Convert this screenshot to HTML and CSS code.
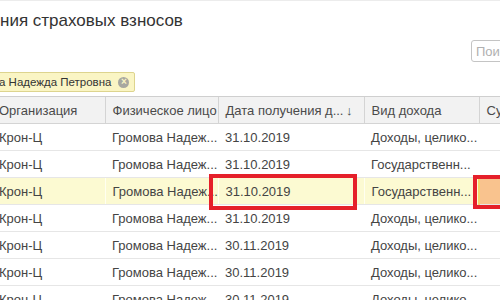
FILE: index.html
```html
<!DOCTYPE html>
<html lang="ru">
<head>
    <meta charset="UTF-8">
    <title>Даты получения страховых взносов</title>
    <link rel="stylesheet" href="styles.css">
</head>
<body>
    <main class="page">
        <h1 class="title">ния страховых взносов</h1>
        <div class="toolbar">
            <input class="search" type="text" placeholder="Поиск">
        </div>
        <div class="filters">
            <span class="tag">а Надежда Петровна <span class="tag-close">×</span></span>
        </div>
        <div class="grid-wrap">
            <table class="grid">
                <colgroup>
                    <col class="c-org"><col class="c-person"><col class="c-date"><col class="c-kind"><col class="c-sum">
                </colgroup>
                <thead>
                    <tr>
                        <th>Организация</th>
                        <th>Физическое лицо</th>
                        <th><span class="th-sort">Дата получения д...<span class="arrow">↓</span></span></th>
                        <th>Вид дохода</th>
                        <th>Сумма</th>
                    </tr>
                </thead>
                <tbody>
                    <tr><td>Крон-Ц</td><td>Громова Надеж...</td><td>31.10.2019</td><td>Доходы, целико...</td><td></td></tr>
                    <tr><td>Крон-Ц</td><td>Громова Надеж...</td><td>31.10.2019</td><td>Государственн...</td><td></td></tr>
                    <tr class="selected"><td>Крон-Ц</td><td>Громова Надеж...</td><td>31.10.2019</td><td>Государственн...</td><td class="active"></td></tr>
                    <tr><td>Крон-Ц</td><td>Громова Надеж...</td><td>31.10.2019</td><td>Доходы, целико...</td><td></td></tr>
                    <tr><td>Крон-Ц</td><td>Громова Надеж...</td><td>30.11.2019</td><td>Доходы, целико...</td><td></td></tr>
                    <tr><td>Крон-Ц</td><td>Громова Надеж...</td><td>30.11.2019</td><td>Доходы, целико...</td><td></td></tr>
                    <tr><td>Крон-Ц</td><td>Громова Надеж...</td><td>30.11.2019</td><td>Доходы, целико...</td><td></td></tr>
                </tbody>
            </table>
            <div class="mark mark-date"></div>
            <div class="mark mark-sum"></div>
        </div>
    </main>
</body>
</html>
```

FILE: styles.css
```css
:root {
    --text: #444444;
    --line: #d4d4d4;
    --row-line: #e6e6e6;
    --head-bg: #f2f2f2;
    --sel-bg: #fcfad2;
    --tag-bg: #faf5c4;
    --mark: #e5202a;
    --font: 'Liberation Sans', Arial, sans-serif;
}
body {
    margin: 0;
    width: 500px;
    height: 300px;
    overflow: hidden;
    background: #ffffff;
    font-family: var(--font);
    color: var(--text);
}
.page {
    border-top: 1px solid #ececec;
}
.title {
    margin: 10px 0 0 0;
    font-size: 17px;
    font-weight: normal;
    line-height: 20px;
    color: #333333;
}
.toolbar {
    display: flex;
    justify-content: flex-end;
    margin-top: 9px;
    margin-right: -51px;
}
.search {
    width: 80px;
    height: 22px;
    box-sizing: border-box;
    padding: 0 4px;
    border: 1px solid #c4c4c4;
    border-radius: 3px;
    font-family: var(--font);
    font-size: 13px;
    color: var(--text);
}
.search::placeholder {
    color: #b0b0b0;
}
.filters {
    margin-top: 10px;
    height: 24px;
}
.tag {
    display: inline-flex;
    align-items: center;
    height: 18px;
    margin-left: -2px;
    padding: 0 5px 0 0;
    background: var(--tag-bg);
    border: 1px solid #ddd48e;
    border-radius: 2px;
    font-size: 11.5px;
    color: #333333;
}
.tag-close {
    display: inline-flex;
    justify-content: center;
    align-items: center;
    width: 11px;
    height: 11px;
    margin-left: 7px;
    border-radius: 50%;
    background: #a8a8a0;
    color: var(--tag-bg);
    font-size: 10px;
    font-weight: bold;
    line-height: 1;
}
.grid-wrap {
    position: relative;
}
.grid {
    margin-left: -8px;
    border-collapse: collapse;
    table-layout: fixed;
    width: 580px;
    font-size: 13px;
}
.c-org { width: 113px; }
.c-person { width: 113px; }
.c-date { width: 146px; }
.c-kind { width: 115px; }
.c-sum { width: 93px; }
.grid th {
    height: 26px;
    padding: 0 7px;
    background: var(--head-bg);
    border-top: 1px solid #cfcfcf;
    border-bottom: 1px solid var(--line);
    border-left: 1px solid var(--line);
    text-align: left;
    font-weight: normal;
    color: #4a4a4a;
    white-space: nowrap;
    overflow: hidden;
}
.grid th:first-child {
    border-left: none;
}
.th-sort {
    display: flex;
    justify-content: space-between;
}
.arrow {
    margin-right: 4px;
}
.grid td {
    height: 26px;
    padding: 0 7px;
    border-bottom: 1px solid var(--row-line);
    white-space: nowrap;
    overflow: hidden;
}
.grid tr.selected td {
    background: var(--sel-bg);
    border-left: 1px solid #fffff0;
}
.grid tr.selected td:first-child {
    border-left: none;
}
.grid tr.selected td.active {
    background: #f9c38e;
    border-left: 2px solid #f7d46a;
}
.mark {
    position: absolute;
    border: 4px solid var(--mark);
}
.mark-date {
    left: 209px;
    top: 78px;
    width: 140px;
    height: 28px;
}
.mark-sum {
    left: 473px;
    top: 79px;
    width: 40px;
    height: 26px;
}
```
